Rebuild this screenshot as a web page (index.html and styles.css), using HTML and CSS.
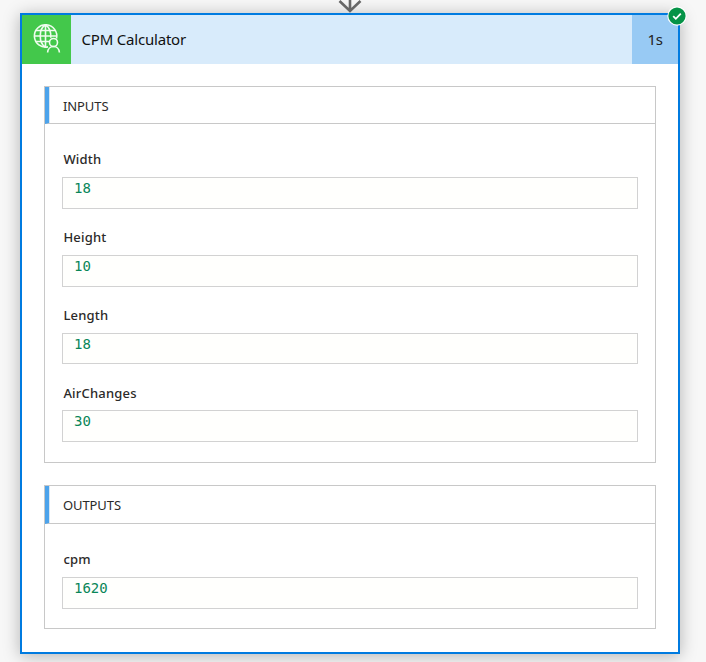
FILE: index.html
```
<!DOCTYPE html>
<html lang="en">
<head>
<meta charset="utf-8">
<title>CPM Calculator</title>
<link rel="stylesheet" href="styles.css">
</head>
<body>
<main class="canvas">
  <svg class="connector" width="24" height="14" viewBox="0 0 24 14" fill="none" stroke="#666" stroke-width="2.6"><path d="M12 0v11M1.500 1l10.500 10L22.500 1"/></svg>
  <article class="card">
    <header class="card-header">
      <div class="brand">
        <svg width="30" height="32" viewBox="0 0 30 32" fill="none" stroke="#effcef" stroke-width="1.600">
          <path d="M15 23.900A11.200 11.200 0 1 1 23.500 15.500"/>
          <path d="M12.500 1.800c-7 4-7 18.400 0 22.400M12.500 1.800c3.600 2.200 5.600 7 5.300 13M12.500 1.800v22.400M3 7.500h19M1.300 13h22.400M3 18.500h13"/>
          <circle cx="20.500" cy="19.500" r="4"/>
          <path d="M14.600 29.500c.5-8 11.300-8 11.800 0"/>
        </svg>
      </div>
      <h1 class="title">CPM Calculator</h1>
      <div class="duration">1s</div>
    </header>
    <svg class="status" width="20" height="20" viewBox="0 0 20 20"><circle cx="10" cy="10" r="9.700" fill="#fff"/><circle cx="10" cy="10" r="8.600" fill="#059347"/><path d="M6.200 10.200l2.600 2.600 5-5.200" fill="none" stroke="#fff" stroke-width="1.800"/></svg>
    <div class="card-body">
      <section class="panel">
        <h2 class="panel-title">INPUTS</h2>
        <div class="fields">
          <div class="field"><div class="label">Width</div><div class="value">18</div></div>
          <div class="field"><div class="label">Height</div><div class="value">10</div></div>
          <div class="field"><div class="label">Length</div><div class="value short">18</div></div>
          <div class="field last"><div class="label">AirChanges</div><div class="value">30</div></div>
        </div>
      </section>
      <section class="panel outputs">
        <h2 class="panel-title">OUTPUTS</h2>
        <div class="fields">
          <div class="field"><div class="label">cpm</div><div class="value">1620</div></div>
        </div>
      </section>
    </div>
  </article>
</main>
</body>
</html>
```
FILE: styles.css
```
* { box-sizing: border-box; }
body { margin: 0; background: #f7f7f7; font-family: "Noto Sans", sans-serif; color: #2b2a29; }
.canvas { height: 662px; overflow: hidden; padding: 13px 26px 0 20px; position: relative; }
.connector { position: absolute; left: 338px; top: 0; z-index: 1; }
.card { position: relative; height: 641px; border: 2px solid #007be0; background: #fff; box-shadow: 0 2px 16px rgba(0,0,0,.28); }
.card-header { display: flex; height: 49px; background: #d8ebfb; }
.brand { width: 49px; background: #43c84b; padding: 8px 0 0 11px; }
.brand svg { display: block; }
.title { flex: 1; margin: 0; padding-left: 10.5px; font-size: 15px; font-weight: 400; line-height: 49px; color: #111; letter-spacing: -.2px; }
.duration { width: 46px; background: #98caf4; text-align: center; font-size: 15px; line-height: 49px; color: #222; letter-spacing: -.5px; }
.status { position: absolute; right: -9px; top: -9px; }
.card-body { padding: 22px; }
.panel { height: 377px; border: 1px solid #c8c8c8; }
.panel-title { height: 37px; margin: 0; padding: 10px 0 0 14px; border-left: 4px solid #4ca3eb; border-bottom: 1px solid #c8c8c8; box-shadow: inset 1px 0 #d6e6f4; font-size: 13px; font-weight: 400; line-height: 18px; letter-spacing: -.1px; }
.fields { padding: 25px 17px 0; }
.field { height: 78px; }
.label { height: 28px; padding-left: 1.4px; font-size: 13px; font-weight: 500; line-height: 20px; letter-spacing: .2px; }
.value { height: 32px; border: 1px solid #d2d2d2; background: #fffffd; padding-left: 11px; font: 14px/20px "DejaVu Sans Mono", monospace; color: #098658; }
.short { height: 31px; }
.last .label { height: 27px; }
.outputs { height: 144px; margin-top: 22px; }
.outputs .panel-title { height: 38px; }
```
